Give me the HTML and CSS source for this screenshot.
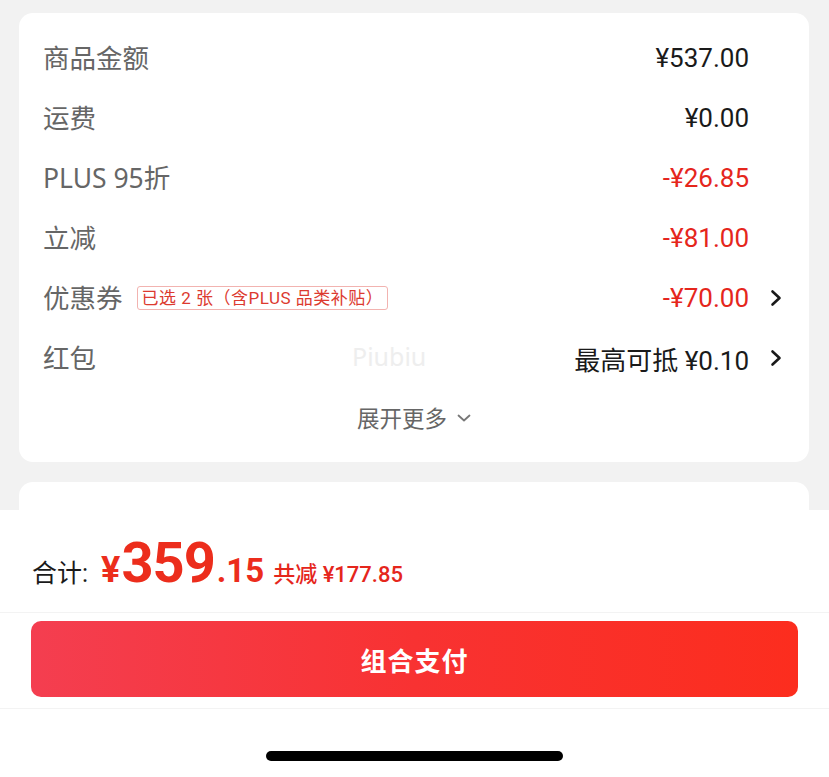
FILE: index.html
```html
<!DOCTYPE html>
<html lang="zh-CN">
<head>
<meta charset="utf-8">
<title>订单结算</title>
<link rel="stylesheet" href="styles.css">
</head>
<body>
<div class="page">
  <div class="card">
    <div class="row">
      <span class="label">商品金额</span>
      <span class="value">¥537.00</span>
      <span class="trail"></span>
    </div>
    <div class="row">
      <span class="label">运费</span>
      <span class="value">¥0.00</span>
      <span class="trail"></span>
    </div>
    <div class="row">
      <span class="label">PLUS 95折</span>
      <span class="value red">-¥26.85</span>
      <span class="trail"></span>
    </div>
    <div class="row">
      <span class="label">立减</span>
      <span class="value red">-¥81.00</span>
      <span class="trail"></span>
    </div>
    <div class="row">
      <span class="label">优惠券</span>
      <span class="tag">已选 2 张（含PLUS 品类补贴）</span>
      <span class="value red">-¥70.00</span>
      <span class="trail">
        <svg class="chev" viewBox="0 0 12 18" width="12" height="18"><path d="M2.5 2.5 L9.5 9 L2.5 15.5" fill="none" stroke="#1a1a1a" stroke-width="2.6" stroke-linecap="round" stroke-linejoin="round"/></svg>
      </span>
    </div>
    <div class="row">
      <span class="label">红包</span>
      <span class="watermark">Piubiu</span>
      <span class="value">最高可抵 ¥0.10</span>
      <span class="trail">
        <svg class="chev" viewBox="0 0 12 18" width="12" height="18"><path d="M2.5 2.5 L9.5 9 L2.5 15.5" fill="none" stroke="#1a1a1a" stroke-width="2.6" stroke-linecap="round" stroke-linejoin="round"/></svg>
      </span>
    </div>
    <div class="more">
      <span>展开更多</span>
      <svg viewBox="0 0 14 8" width="14" height="8"><path d="M1.5 1.5 L7 6.5 L12.5 1.5" fill="none" stroke="#777" stroke-width="1.8" stroke-linecap="round" stroke-linejoin="round"/></svg>
    </div>
  </div>
  <div class="card2"></div>
</div>
<div class="panel">
  <div class="total">
    <span class="t-label">合计:</span>
    <span class="t-yen">¥</span>
    <span class="t-int">359</span>
    <span class="t-dec">.15</span>
    <span class="t-save">共减 ¥177.85</span>
  </div>
  <div class="btn-wrap">
    <div class="btn">组合支付</div>
  </div>
  <div class="home">
    <div class="indicator"></div>
  </div>
</div>
</body>
</html>
```

FILE: styles.css
```css
* { box-sizing: border-box; }
html, body {
  margin: 0;
  padding: 0;
}
body {
  width: 829px;
  height: 777px;
  overflow: hidden;
  background: #f2f2f2;
  font-family: Roboto, "Noto Sans CJK SC", sans-serif;
  color: #1a1a1a;
}
.page {
  padding: 13px 20px 0 19px;
}
.card {
  background: #fff;
  border-radius: 14px;
  padding: 15px 0 16px;
}
.row {
  height: 60px;
  display: flex;
  align-items: center;
  padding: 0 27px 0 24px;
  position: relative;
}
.label {
  font-family: "Noto Sans", "Noto Sans CJK SC", sans-serif;
  font-size: 26.5px;
  color: #666;
  flex: none;
  margin-top: -3px;
}
.value {
  margin-left: auto;
  font-size: 26px;
  color: #1a1a1a;
}
.red { color: #e5261c; }
.trail {
  width: 33px;
  flex: none;
  display: flex;
  justify-content: flex-end;
  align-items: center;
}
.tag {
  margin-left: 14px;
  height: 24px;
  padding: 0 4px;
  border: 1px solid #f2b3b0;
  border-radius: 3px;
  font-size: 17px;
  letter-spacing: 0.5px;
  line-height: 22px;
  color: #dc3a2f;
}
.watermark {
  position: absolute;
  left: 333px;
  top: 11px;
  font-family: "Noto Sans", sans-serif;
  font-size: 25px;
  color: #eeeeee;
}
.more {
  height: 58px;
  display: flex;
  align-items: center;
  justify-content: center;
  gap: 10px;
  font-size: 22.5px;
  color: #666;
}
.more svg { margin-top: 2px; }
.card2 {
  margin-top: 20px;
  height: 28px;
  background: #fff;
  border-radius: 14px 14px 0 0;
}
.panel {
  background: #fff;
  height: 267px;
}
.total {
  height: 103px;
  border-bottom: 1px solid #f3f3f3;
  display: flex;
  align-items: baseline;
  padding: 25px 0 0 32px;
  line-height: 1;
}
.t-label {
  font-size: 25px;
  color: #1a1a1a;
  margin-right: 13px;
}
.t-yen {
  font-size: 36px;
  font-weight: 700;
  color: #ec2d1c;
  margin-right: 1px;
}
.t-int {
  font-size: 56px;
  font-weight: 700;
  color: #ec2d1c;
  letter-spacing: -1px;
}
.t-dec {
  font-size: 33px;
  font-weight: 700;
  color: #ec2d1c;
  margin-left: 2px;
}
.t-save {
  font-size: 22px;
  font-weight: 500;
  color: #e5261c;
  margin-left: 9px;
}
.btn-wrap {
  padding: 8px 31px 11px;
  border-bottom: 1px solid #f3f3f3;
}
.btn {
  height: 76px;
  border-radius: 10px;
  background: linear-gradient(90deg, #f43e50 0%, #f83232 50%, #fc2d1e 100%);
  color: #fff;
  font-size: 26px;
  font-weight: 700;
  display: flex;
  align-items: center;
  justify-content: center;
  letter-spacing: 1px;
}
.home {
  display: flex;
  justify-content: center;
  padding-top: 42px;
}
.indicator {
  width: 297px;
  height: 10px;
  border-radius: 5px;
  background: #000;
}
```
